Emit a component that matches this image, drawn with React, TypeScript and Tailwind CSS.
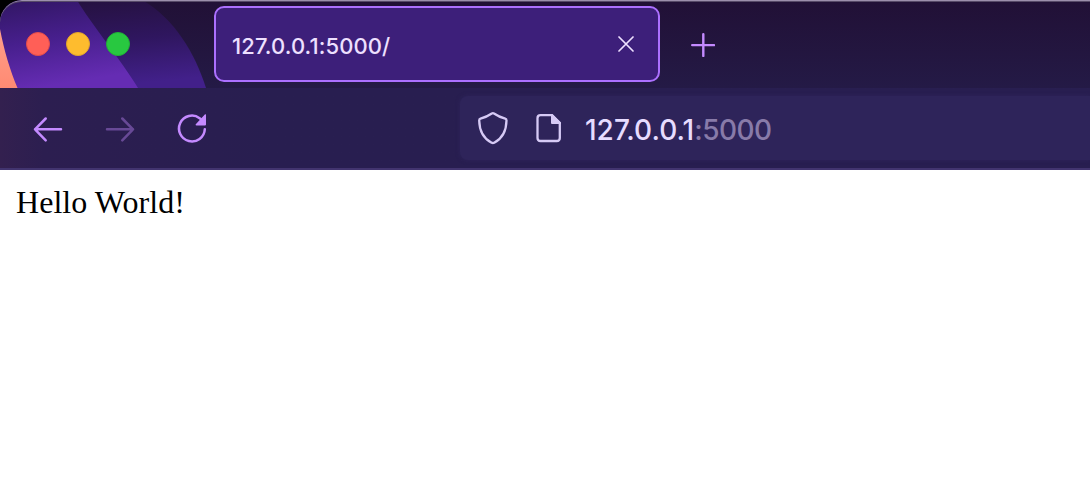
const TabStrip = () => (
  <header className="relative flex h-[88px] shrink-0 overflow-hidden rounded-tl-[22px] bg-linear-to-b from-[#211036] to-[#241a46]">
    <svg className="absolute inset-0 h-[88px] w-[240px]" viewBox="0 0 240 88" aria-hidden="true">
      <defs>
        <linearGradient id="near" x1="0" y1="0" x2="0.25" y2="1">
          <stop offset="0" stopColor="#311663" />
          <stop offset="0.5" stopColor="#471f8d" />
          <stop offset="1" stopColor="#652cb3" />
        </linearGradient>
        <linearGradient id="far" x1="0" y1="0" x2="0.15" y2="1">
          <stop offset="0" stopColor="#25113f" />
          <stop offset="0.5" stopColor="#2f165f" />
          <stop offset="1" stopColor="#42208a" />
        </linearGradient>
        <linearGradient id="coral" x1="0" y1="0" x2="0" y2="1">
          <stop offset="0" stopColor="#ffa08a" />
          <stop offset="1" stopColor="#ff8a73" />
        </linearGradient>
      </defs>
      <path d="M70 0H142C174 18 195 53 206 88H70Z" fill="url(#far)" />
      <path d="M0 0H77C91 24 122 61 138 88H0Z" fill="url(#near)" />
      <path d="M0 29C4 50 10 70 17.5 88H0Z" fill="url(#coral)" />
    </svg>
    <div className="relative flex w-[214px] shrink-0 gap-4 pl-[26px] pt-8">
      <span className="size-6 rounded-full border border-[#e34d4b] bg-[#ff5f57]" />
      <span className="size-6 rounded-full border border-[#e3a52c] bg-[#febc2e]" />
      <span className="size-6 rounded-full border border-[#20b237] bg-[#28c840]" />
    </div>
    <div className="relative mt-1.5 flex h-[76px] w-[446px] shrink-0 items-center justify-between rounded-[10px] border-2 border-[#ac70ff] bg-[#3d1f7a] pl-4 pr-6">
      <span className="pt-1 font-['Inter',sans-serif] text-[22px] leading-7 font-medium tracking-[0.1px] text-[#eee0ff]">
        127.0.0.1:5000/
      </span>
      <svg className="size-4" viewBox="0 0 16 16" fill="none" stroke="#eee0ff" strokeWidth="1.7" strokeLinecap="round" aria-label="Close tab">
        <path d="M1 1 15 15M15 1 1 15" />
      </svg>
    </div>
    <svg className="relative ml-[31px] mt-[33px] size-6" viewBox="0 0 24 24" fill="none" stroke="#c48aff" strokeWidth="2.4" strokeLinecap="round" aria-label="New tab">
      <path d="M12.3 1.2V23M1.2 12.1H23" />
    </svg>
    <div className="absolute inset-0 rounded-tl-[22px] border-t border-t-[#9c8fac] shadow-[inset_0_1px_0_#574a68]" />
  </header>
);

const NavBar = () => (
  <nav className="relative flex h-[82px] shrink-0 border-b-2 border-[#42346f] bg-linear-to-r from-[#33204f] via-[#2c1e50] via-4% to-[#281e50] to-25%">
    <div className="flex w-[460px] shrink-0 pl-8 pt-[25px] text-[#c48aff]">
      <svg className="h-8 w-8" viewBox="0 0 32 32" fill="none" stroke="currentColor" strokeWidth="2.5" strokeLinecap="round" strokeLinejoin="round" aria-label="Back">
        <path d="M29 16.3H3M13.7 5.5 3 16.3l10.7 11" />
      </svg>
      <svg className="ml-10 h-8 w-8 opacity-40" viewBox="0 0 32 32" fill="none" stroke="currentColor" strokeWidth="2.5" strokeLinecap="round" strokeLinejoin="round" aria-label="Forward">
        <path d="M3 16.3h26M18.3 5.5 29 16.3l-10.7 11" />
      </svg>
      <svg className="ml-10 h-8 w-8" viewBox="0 0 32 32" fill="none" aria-label="Reload">
        <path d="M28.8 16.2A12.9 12.9 0 1 1 23.6 5.2L26 7" stroke="currentColor" strokeWidth="2.5" strokeLinecap="round" />
        <path d="M30 1.8v9.6q0 1-1 1h-8.5c-1 0-1.2-.8-.5-1.5L28.8 1.6c.6-.6 1.2-.4 1.2.2Z" fill="currentColor" />
      </svg>
    </div>
    <div className="mt-2 flex h-16 flex-1 items-center rounded-l-lg bg-[#2e245a] pl-4 shadow-[0_0_4px_#2e245a]">
      <svg className="h-9 w-9" viewBox="0 0 36 36" fill="none" stroke="#d6caf5" strokeWidth="2.3" strokeLinejoin="round" aria-label="Tracking protection">
        <path d="M15.8 3.5q1.1-.7 2.2 0c3.5 2.4 7 4 11.2 5.1q1.3.4 1.3 1.8C30.3 21 27 28 18.2 32.7q-1.3.6-2.6 0C6.8 28 3.4 21 3.2 10.4q0-1.4 1.3-1.8C8.7 7.5 12.3 5.9 15.8 3.5Z" />
      </svg>
      <svg className="ml-5 h-9 w-9" viewBox="0 0 36 36" fill="none" aria-label="Site information">
        <path d="M8.5 5.2H20L27.8 13V28q0 3-3 3H8.5q-3 0-3-3V8.2q0-3 3-3Z" stroke="#d6caf5" strokeWidth="2.3" strokeLinejoin="round" />
        <path d="M19 4h1.5L29 12.5V14H20q-1 0-1-1Z" fill="#d6caf5" />
      </svg>
      <span className="ml-[17px] pt-1 font-['Inter',sans-serif] text-[28px] leading-8 font-medium whitespace-nowrap text-[#e7dcff]">
        127.0.0.1<span className="tracking-[-0.5px] text-[#887ba9]">:5000</span>
      </span>
    </div>
  </nav>
);

export default function App() {
  return (
    <div className="flex h-screen flex-col overflow-hidden bg-black">
      <TabStrip />
      <NavBar />
      <main className="flex-1 bg-white px-4 pt-3.5 font-['Liberation_Serif',serif] text-[32px] leading-9 tracking-[0.05px] text-black">
        Hello World!
      </main>
    </div>
  );
}
